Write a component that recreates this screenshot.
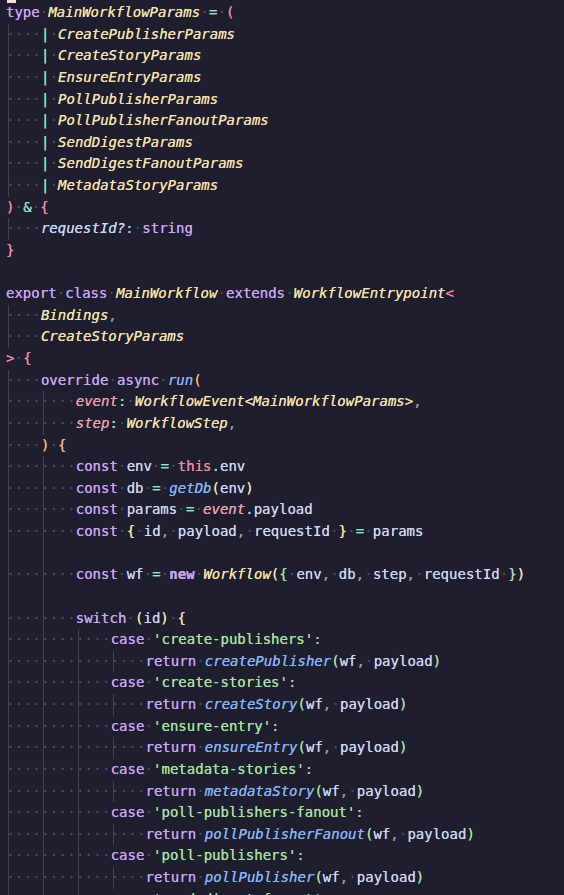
type Tok = string | [string, string]

interface Line {
  i: number
  g?: number
  t: Tok[]
}

const kw = 'text-[#cba6f7]'
const ty = 'text-[#f9e2af] italic'
const op = 'text-[#94e2d5]'
const red = 'text-[#f38ba8]'
const mar = 'text-[#eba0ac] italic'
const pea = 'text-[#fab387]'
const yel = 'text-[#f9e2af]'
const grn = 'text-[#a6e3a1]'
const fn = 'text-[#89b4fa] italic'
const tx = 'text-[#cdd6f4]'
const pu = 'text-[#9399b2]'

const ret = (name: string): Line => ({
  i: 16,
  t: [[kw, 'return'], ' ', [fn, name], [grn, '('], [tx, 'wf'], [pu, ','], ' ', [tx, 'payload'], [grn, ')']],
})
const cas = (name: string): Line => ({
  i: 12,
  t: [[kw, 'case'], ' ', [grn, `'${name}'`], ['text-[#bac2de]', ':']],
})
const union = (name: string): Line => ({ i: 4, t: [[op, '|'], ' ', [ty, name]] })

const LINES: Line[] = [
  { i: 0, t: [[kw, 'type'], ' ', [ty, 'MainWorkflowParams'], ' ', [op, '='], ' ', [red, '(']] },
  union('CreatePublisherParams'),
  union('CreateStoryParams'),
  union('EnsureEntryParams'),
  union('PollPublisherParams'),
  union('PollPublisherFanoutParams'),
  union('SendDigestParams'),
  union('SendDigestFanoutParams'),
  union('MetadataStoryParams'),
  { i: 0, t: [[red, ')'], ' ', [op, '&'], ' ', [red, '{']] },
  { i: 4, t: [[tx + ' italic', 'requestId?'], [op, ':'], ' ', [kw, 'string']] },
  { i: 0, t: [[red, '}']] },
  { i: 0, t: [] },
  {
    i: 0,
    t: [[kw, 'export'], ' ', [kw, 'class'], ' ', [ty, 'MainWorkflow'], ' ', [kw, 'extends'], ' ', [ty, 'WorkflowEntrypoint'], [red, '<']],
  },
  { i: 4, t: [[ty, 'Bindings'], [pu, ',']] },
  { i: 4, t: [[ty, 'CreateStoryParams']] },
  { i: 0, t: [[red, '>'], ' ', [red, '{']] },
  { i: 4, t: [[kw, 'override'], ' ', [kw, 'async'], ' ', [fn, 'run'], [pea, '(']] },
  {
    i: 8,
    t: [[mar, 'event'], [op, ':'], ' ', [ty, 'WorkflowEvent'], [yel, '<'], [ty, 'MainWorkflowParams'], [yel, '>'], [pu, ',']],
  },
  { i: 8, t: [[mar, 'step'], [op, ':'], ' ', [ty, 'WorkflowStep'], [pu, ',']] },
  { i: 4, t: [[pea, ')'], ' ', [pea, '{']] },
  { i: 8, t: [[kw, 'const'], ' ', [tx, 'env'], ' ', [op, '='], ' ', [red, 'this'], [op, '.'], [tx, 'env']] },
  { i: 8, t: [[kw, 'const'], ' ', [tx, 'db'], ' ', [op, '='], ' ', [fn, 'getDb'], [yel, '('], [tx, 'env'], [yel, ')']] },
  { i: 8, t: [[kw, 'const'], ' ', [tx, 'params'], ' ', [op, '='], ' ', [mar, 'event'], [op, '.'], [tx, 'payload']] },
  {
    i: 8,
    t: [
      [kw, 'const'], ' ', [yel, '{'], ' ', [tx, 'id'], [pu, ','], ' ', [tx, 'payload'], [pu, ','], ' ',
      [tx, 'requestId'], ' ', [yel, '}'], ' ', [op, '='], ' ', [tx, 'params'],
    ],
  },
  { i: 0, g: 2, t: [] },
  {
    i: 8,
    t: [
      [kw, 'const'], ' ', [tx, 'wf'], ' ', [op, '='], ' ', [kw + ' font-bold', 'new'], ' ', [ty, 'Workflow'],
      [yel, '('], [grn, '{'], ' ', [tx, 'env'], [pu, ','], ' ', [tx, 'db'], [pu, ','], ' ', [tx, 'step'], [pu, ','], ' ',
      [tx, 'requestId'], ' ', [grn, '}'], [yel, ')'],
    ],
  },
  { i: 0, g: 2, t: [] },
  { i: 8, t: [[kw, 'switch'], ' ', [yel, '('], [tx, 'id'], [yel, ')'], ' ', [yel, '{']] },
  cas('create-publishers'),
  ret('createPublisher'),
  cas('create-stories'),
  ret('createStory'),
  cas('ensure-entry'),
  ret('ensureEntry'),
  cas('metadata-stories'),
  ret('metadataStory'),
  cas('poll-publishers-fanout'),
  ret('pollPublisherFanout'),
  cas('poll-publishers'),
  ret('pollPublisher'),
  cas('send-digest-fanout'),
]

const GUIDE =
  'bg-[linear-gradient(90deg,transparent_2px,#414357_2px,#414357_3px,transparent_3px)]'

function Cell({ guide, dot }: { guide?: boolean; dot?: boolean }) {
  return (
    <span
      className={`inline-block h-[21.625px] w-[8.73px] text-center align-top font-normal not-italic text-[#4d4f66] [text-shadow:none] ${guide ? GUIDE : ''}`}
    >
      {dot ? '·' : ''}
    </span>
  )
}

function CodeLine({ line }: { line: Line }) {
  const guides = line.g ?? Math.floor(line.i / 4)
  const lead = line.t.length === 0 ? guides * 4 : line.i
  return (
    <div className="h-[21.625px] whitespace-pre">
      {Array.from({ length: lead }, (_, k) => (
        <Cell key={k} guide={k % 4 === 0 && k / 4 < guides} dot={line.t.length > 0} />
      ))}
      {line.t.map((tok, k) =>
        typeof tok === 'string' ? (
          <Cell key={`t${k}`} dot />
        ) : (
          <span key={`t${k}`} className={tok[0]}>
            {tok[1]}
          </span>
        ),
      )}
    </div>
  )
}

export default function App() {
  return (
    <div
      className="h-[895px] w-[564px] overflow-hidden bg-[#1e1e2e] pl-[6px] text-[14px] leading-[21.625px] text-[#cdd6f4] [text-shadow:0_0_0.4px_currentColor]"
      style={{ fontFamily: '"DejaVu Sans Mono", "Liberation Mono", monospace' }}
    >
      {/* cursor remnant from the line above */}
      <div className="h-[2px]">
        <div className="ml-[1px] h-[3px] w-[9px] bg-[#f2dede]" />
      </div>
      {LINES.map((line, idx) => (
        <CodeLine key={idx} line={line} />
      ))}
    </div>
  )
}
